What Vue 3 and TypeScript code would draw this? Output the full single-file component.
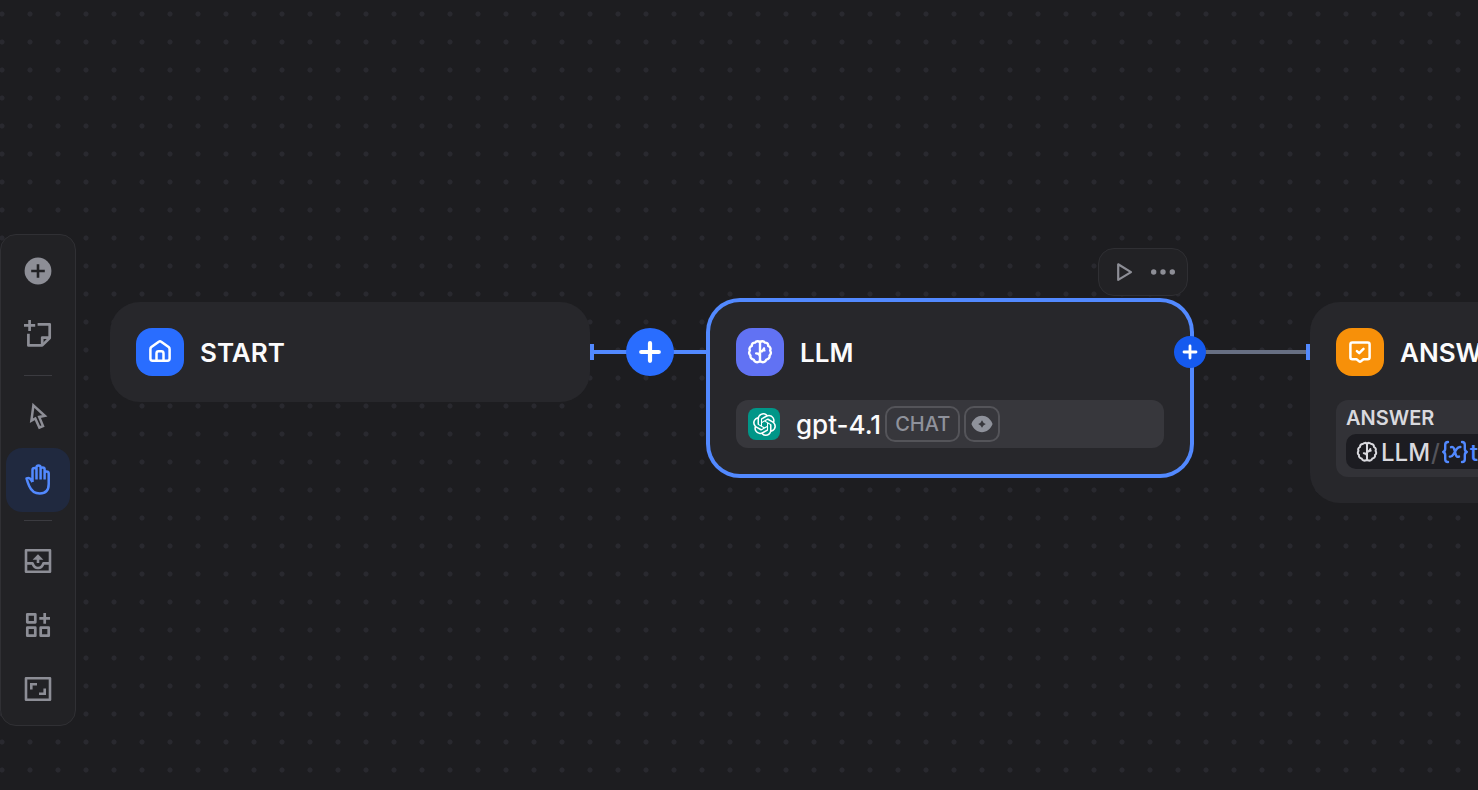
<script setup lang="ts">
import { ref } from 'vue'

type Mode = 'pointer' | 'hand'

const mode = ref<Mode>('hand')
</script>

<template>
  <main class="canvas">
    <svg class="defs" aria-hidden="true">
      <symbol id="brain" viewBox="0 0 26 26">
        <g fill="none" stroke="currentColor" stroke-width="2.4" stroke-linejoin="round" stroke-linecap="round">
          <path d="M13 3.2C11.6 1.8 9.2 1.9 8.1 3.6C6.1 3.4 4.6 5 4.8 6.9C2.8 7.7 1.9 9.9 2.9 11.6C1.7 13.2 1.9 15.4 3.5 16.5C3.1 18.6 4.6 20.5 6.7 20.6C7.3 22.7 9.7 23.7 11.4 22.9C12.1 22.8 12.6 22.5 13 22.1C13.4 22.5 13.9 22.8 14.6 22.9C16.3 23.7 18.7 22.7 19.3 20.6C21.4 20.5 22.9 18.6 22.5 16.5C24.1 15.4 24.3 13.2 23.1 11.6C24.1 9.9 23.2 7.7 21.2 6.9C21.4 5 19.9 3.4 17.9 3.6C16.8 1.9 14.4 1.8 13 3.2Z" />
          <path d="M13 3.5V22M13 12.6Q16.4 12.4 17 9.4M17 11.4H17.4M13 17.2Q12.6 14.6 9.2 14.4" />
        </g>
      </symbol>
    </svg>

    <svg class="edges" width="1478" height="790" aria-hidden="true">
      <path d="M592 352H708" stroke="#5289ff" stroke-width="4" />
      <path d="M1190 352H1308" stroke="#676f83" stroke-width="4" />
      <path d="M592 344V360M1308 344V360" stroke="#5289ff" stroke-width="4" />
    </svg>

    <section class="node start">
      <header class="head">
        <span class="block-icon blue">
          <svg viewBox="0 0 48 48" fill="none" stroke="#fff" stroke-width="2.5" stroke-linejoin="round">
            <path d="M14.4 21.2Q14.4 19.9 15.4 19.1L22.8 13.7Q24 12.9 25.2 13.7L32.6 19.1Q33.6 19.9 33.6 21.2V30.6Q33.6 32.7 31.5 32.7H16.5Q14.4 32.7 14.4 30.6Z" />
            <path d="M20.5 32.7V25.5Q20.5 23.3 22.6 23.3H25.4Q27.5 23.3 27.5 25.5V32.7" />
          </svg>
        </span>
        <h2>START</h2>
      </header>
    </section>

    <section class="node llm">
      <header class="head">
        <span class="block-icon indigo">
          <svg class="brain" viewBox="0 0 26 26"><use href="#brain" /></svg>
        </span>
        <h2>LLM</h2>
      </header>
      <div class="model">
        <span class="provider">
          <svg viewBox="0 0 24 24" fill="#fff">
            <path d="M22.2819 9.8211a5.9847 5.9847 0 0 0-.5157-4.9108 6.0462 6.0462 0 0 0-6.5098-2.9A6.0651 6.0651 0 0 0 4.9807 4.1818a5.9847 5.9847 0 0 0-3.9977 2.9 6.0462 6.0462 0 0 0 .7427 7.0966 5.98 5.98 0 0 0 .511 4.9107 6.051 6.051 0 0 0 6.5146 2.9001A5.9847 5.9847 0 0 0 13.2599 24a6.0557 6.0557 0 0 0 5.7718-4.2058 5.9894 5.9894 0 0 0 3.9977-2.9001 6.0557 6.0557 0 0 0-.7475-7.0729zm-9.022 12.6081a4.4755 4.4755 0 0 1-2.8764-1.0408l.1419-.0804 4.7783-2.7582a.7948.7948 0 0 0 .3927-.6813v-6.7369l2.02 1.1686a.071.071 0 0 1 .038.052v5.5826a4.504 4.504 0 0 1-4.4945 4.4944zm-9.6607-4.1254a4.4708 4.4708 0 0 1-.5346-3.0137l.142.0852 4.783 2.7582a.7712.7712 0 0 0 .7806 0l5.8428-3.3685v2.3324a.0804.0804 0 0 1-.0332.0615L9.74 19.9502a4.4992 4.4992 0 0 1-6.1408-1.6464zM2.3408 7.8956a4.485 4.485 0 0 1 2.3655-1.9728V11.6a.7664.7664 0 0 0 .3879.6765l5.8144 3.3543-2.0201 1.1685a.0757.0757 0 0 1-.071 0l-4.8303-2.7865A4.504 4.504 0 0 1 2.3408 7.872zm16.5963 3.8558L13.1038 8.364 15.1192 7.2a.0757.0757 0 0 1 .071 0l4.8303 2.7913a4.4944 4.4944 0 0 1-.6765 8.1042v-5.6772a.79.79 0 0 0-.407-.667zm2.0107-3.0231l-.142-.0852-4.7735-2.7818a.7759.7759 0 0 0-.7854 0L9.409 9.2297V6.8974a.0662.0662 0 0 1 .0284-.0615l4.8303-2.7866a4.4992 4.4992 0 0 1 6.6802 4.66zM8.3065 12.863l-2.02-1.1638a.0804.0804 0 0 1-.038-.0567V6.0742a4.4992 4.4992 0 0 1 7.3757-3.4537l-.142.0805L8.704 5.459a.7948.7948 0 0 0-.3927.6813zm1.0976-2.3654l2.602-1.4998 2.6069 1.4998v2.9994l-2.5974 1.4997-2.6067-1.4997Z" />
          </svg>
        </span>
        <span class="model-name">gpt-4.1</span>
        <span class="badge">CHAT</span>
        <span class="badge eye">
          <svg viewBox="0 0 22 18">
            <path fill="#8f929b" fill-rule="evenodd" d="M11 .8C15.8 .8 19.3 3.8 21.3 8.2Q21.7 9 21.3 9.8C19.3 14.2 15.8 17.2 11 17.2S2.7 14.2 .7 9.8Q.3 9 .7 8.2C2.7 3.8 6.2 .8 11 .8ZM11 5.2Q10 8 7.2 9Q10 10 11 12.8Q12 10 14.8 9Q12 8 11 5.2Z" />
          </svg>
        </span>
      </div>
    </section>

    <section class="node answer">
      <header class="head">
        <span class="block-icon orange">
          <svg viewBox="0 0 48 48" fill="none" stroke="#fff" stroke-width="2.5" stroke-linejoin="round" stroke-linecap="round">
            <path d="M16.4 14.4H31.6Q33.6 14.4 33.6 16.4V29.2Q33.6 31.2 31.6 31.2H27.5L24.8 33.4Q24 33.9 23.2 33.4L20.5 31.2H16.4Q14.4 31.2 14.4 29.2V16.4Q14.4 14.4 16.4 14.4Z" />
            <path d="M20.9 23.1L23.2 25.2L27.5 20.8" />
          </svg>
        </span>
        <h2>ANSWER</h2>
      </header>
      <div class="output">
        <h3>ANSWER</h3>
        <div class="chip">
          <svg class="chip-brain" viewBox="0 0 26 26"><use href="#brain" /></svg>
          <span>LLM</span>
          <span class="slash">/</span>
          <svg class="var" viewBox="0 0 28 24" fill="none" stroke="currentColor" stroke-width="2.4" stroke-linecap="round" stroke-linejoin="round">
            <path d="M7 2Q4.2 2 4.2 4.8V8.8Q4.2 11.4 2.2 12Q4.2 12.6 4.2 15.2V19.2Q4.2 22 7 22M21 2Q23.8 2 23.8 4.8V8.8Q23.8 11.4 25.8 12Q23.8 12.6 23.8 15.2V19.2Q23.8 22 21 22" />
            <path d="M10 7.2Q12.4 6.4 13.1 8.8L14.9 15Q15.6 17.4 18 16.6M19.4 7Q17.2 6.6 15.6 9.2L12.4 14.4Q10.8 17 8.8 16.6" />
          </svg>
          <span class="var-name">text</span>
        </div>
      </div>
    </section>

    <button class="insert" type="button" aria-label="Insert block between START and LLM">
      <svg viewBox="0 0 48 48" stroke="#fff" stroke-width="4.2" stroke-linecap="round"><path d="M24 15.2V32.8M15.2 24H32.8" /></svg>
    </button>
    <button class="append" type="button" aria-label="Add next block">
      <svg viewBox="0 0 32 32" stroke="#fff" stroke-width="2.8" stroke-linecap="round"><path d="M16 10V22M10 16H22" /></svg>
    </button>

    <div class="node-actions">
      <button type="button" aria-label="Run this step">
        <svg viewBox="0 0 32 32" fill="none" stroke="currentColor" stroke-width="2.2" stroke-linejoin="round"><path d="M12.2 8.3V23.9L25 16.1Z" /></svg>
      </button>
      <button type="button" aria-label="More actions">
        <svg viewBox="0 0 32 32" fill="currentColor"><circle cx="5.7" cy="16" r="2.7" /><circle cx="15" cy="16" r="2.7" /><circle cx="24.3" cy="16" r="2.7" /></svg>
      </button>
    </div>

    <nav class="toolbar" aria-label="Canvas tools">
      <button type="button" aria-label="Add block">
        <svg viewBox="0 0 32 32"><circle cx="16" cy="16" r="13.4" fill="currentColor" /><path d="M16 9.2V22.8M9.2 16H22.8" stroke="#222225" stroke-width="2.6" /></svg>
      </button>
      <button type="button" aria-label="Add note">
        <svg viewBox="0 0 32 32" fill="none" stroke="currentColor" stroke-width="2.7" stroke-linejoin="round">
          <path d="M7.6 1V12M2 6.4H13.2" />
          <path d="M15.6 5.3H27.7V19L20.2 26.4H6.4V14.8" />
          <path d="M20.2 26V18.6H27.7" />
        </svg>
      </button>
      <hr />
      <button type="button" aria-label="Pointer mode" :aria-pressed="mode === 'pointer'" :class="{ active: mode === 'pointer' }" @click="mode = 'pointer'">
        <svg viewBox="0 0 32 32" fill="none" stroke="currentColor" stroke-width="2.5">
          <path d="M11.4 5.4L22.8 15.8L17.2 16.9L21 26L17.4 27.6L13.3 18.4L9.4 20.6Z" />
        </svg>
      </button>
      <button type="button" aria-label="Hand mode" :aria-pressed="mode === 'hand'" :class="{ active: mode === 'hand' }" @click="mode = 'hand'">
        <svg viewBox="0 0 32 32" fill="none" stroke="currentColor" stroke-width="2.5" stroke-linejoin="round">
          <path d="M10.5 18V5.8Q10.5 4 12.5 4T14.5 5.8V15.4M14.5 15.4V3.2Q14.5 1.4 16.5 1.4T18.6 3.2V15.4M18.6 15.4V5Q18.6 3.4 20.6 3.4T22.6 5.2V15.4M22.6 9.4Q22.6 7.6 24.6 7.6T26.7 9.4V20Q26.7 29.5 17.8 29.5Q10.4 29.5 7.2 22Q5.6 18.2 4.5 14.4Q7.4 13.4 8.8 15.4L10.5 18" />
        </svg>
      </button>
      <hr />
      <button type="button" aria-label="Export">
        <svg viewBox="0 0 32 32" fill="none" stroke="currentColor" stroke-width="2.6" stroke-linejoin="round">
          <rect x="4" y="5.3" width="24" height="21.4" />
          <path d="M4 18.4H10.6Q12 23 16 23T21.4 18.4H28M16 18V13.5" />
          <path d="M16 9.2L21.4 14.8H10.6Z" fill="currentColor" stroke="none" />
        </svg>
      </button>
      <button type="button" aria-label="Organize blocks">
        <svg viewBox="0 0 32 32" fill="none" stroke="currentColor" stroke-width="2.7" stroke-linejoin="round">
          <path d="M5.3 5.3H13.3V13.3H5.3ZM5.3 18.7H13.3V26.7H5.3ZM18.7 18.7H26.7V26.7H18.7ZM22.7 4V14.7M17.3 9.3H28" />
        </svg>
      </button>
      <button type="button" aria-label="Maximize canvas">
        <svg viewBox="0 0 32 32" fill="none" stroke="currentColor" stroke-width="2.6" stroke-linejoin="round">
          <rect x="4" y="5.3" width="24" height="21.4" />
          <path d="M9.3 16.6V11.2H15M22.7 15.4V20.8H17" stroke-linejoin="miter" />
        </svg>
      </button>
    </nav>
  </main>
</template>

<style>
body {
  margin: 0;
  background: #1d1d20;
}
</style>

<style scoped>
.canvas {
  position: relative;
  height: 100vh;
  overflow: hidden;
  font-family: Inter, "Liberation Sans", sans-serif;
  background: radial-gradient(circle, #29292f 2px, transparent 3px) -12px 0 / 28px 28px #1d1d20;
}
svg {
  display: block;
}
button {
  display: flex;
  align-items: center;
  justify-content: center;
  padding: 0;
  border: 0;
  background: none;
  color: inherit;
  cursor: pointer;
}
.defs {
  position: absolute;
  width: 0;
  height: 0;
}
.edges {
  position: absolute;
  top: 0;
  left: 0;
}
.node {
  position: absolute;
  top: 302px;
  box-sizing: border-box;
  width: 480px;
  padding: 26px;
  border-radius: 30px;
  background: #27272b;
}
.start {
  left: 110px;
}
.llm {
  left: 710px;
  box-shadow: 0 0 0 4px #5289ff;
}
.answer {
  left: 1310px;
}
.head {
  display: flex;
  align-items: center;
  gap: 16px;
}
h2 {
  margin: 0;
  padding-top: 2px;
  font-size: 26px;
  font-weight: 600;
  line-height: 32px;
  color: #fbfbfc;
}
.block-icon {
  width: 48px;
  height: 48px;
  border-radius: 16px;
  color: #fff;
}
.block-icon.indigo {
  display: flex;
  align-items: center;
  justify-content: center;
}
.brain {
  width: 26px;
  height: 26px;
}
.blue {
  background: #296dff;
}
.indigo {
  background: #6172f3;
}
.orange {
  background: #f79009;
}
.model {
  display: flex;
  align-items: center;
  gap: 4px;
  height: 48px;
  margin-top: 24px;
  padding: 0 12px;
  border-radius: 12px;
  background: #37373c;
}
.provider {
  display: flex;
  align-items: center;
  justify-content: center;
  width: 32px;
  height: 32px;
  margin-right: 12px;
  border-radius: 8px;
  background: #009688;
}
.provider svg {
  width: 23px;
  height: 23px;
}
.model-name {
  padding-top: 2px;
  font-size: 26px;
  font-weight: 500;
  line-height: 32px;
  color: #fbfbfc;
}
.badge {
  display: flex;
  align-items: center;
  justify-content: center;
  box-sizing: border-box;
  height: 36px;
  padding: 0 8px;
  border: 2px solid #545459;
  border-radius: 10px;
  font-size: 20px;
  font-weight: 500;
  color: #8f929b;
}
.eye {
  width: 36px;
  padding: 0;
}
.eye svg {
  width: 22px;
  height: 18px;
}
.output {
  margin-top: 24px;
  padding: 4px 10px 8px;
  border-radius: 12px;
  background: #323237;
}
h3 {
  margin: 0 0 2px;
  font-size: 20px;
  font-weight: 600;
  line-height: 28px;
  color: #d9d9de;
}
.chip {
  display: inline-flex;
  align-items: center;
  height: 35px;
  padding: 0 10px;
  border-radius: 10px;
  background: #1c1c21;
  vertical-align: top;
  font-size: 24px;
  font-weight: 500;
  line-height: 30px;
  color: #d9d9de;
}
.chip span {
  padding-top: 2px;
}
.chip-brain {
  width: 22px;
  height: 22px;
  margin-right: 3px;
}
.chip .slash {
  margin: 0 1px;
  color: #54545b;
}
.var {
  width: 28px;
  height: 24px;
  margin-right: 1px;
}
.var,
.var-name {
  color: #5289ff;
}
.insert,
.append {
  position: absolute;
  border-radius: 50%;
}
.insert {
  top: 328px;
  left: 626px;
  width: 48px;
  height: 48px;
  background: #296dff;
}
.append {
  top: 336px;
  left: 1174px;
  width: 32px;
  height: 32px;
  background: #155aef;
}
.insert svg,
.append svg {
  width: 100%;
  height: 100%;
}
.node-actions {
  position: absolute;
  top: 248px;
  left: 1098px;
  display: flex;
  gap: 10px;
  padding: 7px;
  border: 1px solid #2f2f33;
  border-radius: 16px;
  background: #222225;
  color: #8d8e96;
}
.node-actions svg {
  width: 32px;
  height: 32px;
}
.toolbar {
  position: absolute;
  top: 234px;
  left: 0;
  padding: 4px 5px;
  border: 1px solid #303034;
  border-radius: 16px;
  background: #222225;
  color: #8d8e96;
}
.toolbar button {
  width: 64px;
  height: 64px;
  border-radius: 16px;
}
.toolbar svg {
  width: 32px;
  height: 32px;
}
.toolbar button.active {
  background: #20293f;
  color: #5289ff;
}
.toolbar hr {
  width: 28px;
  height: 1px;
  margin: 8px auto;
  border: 0;
  background: #3b3b40;
}
</style>
